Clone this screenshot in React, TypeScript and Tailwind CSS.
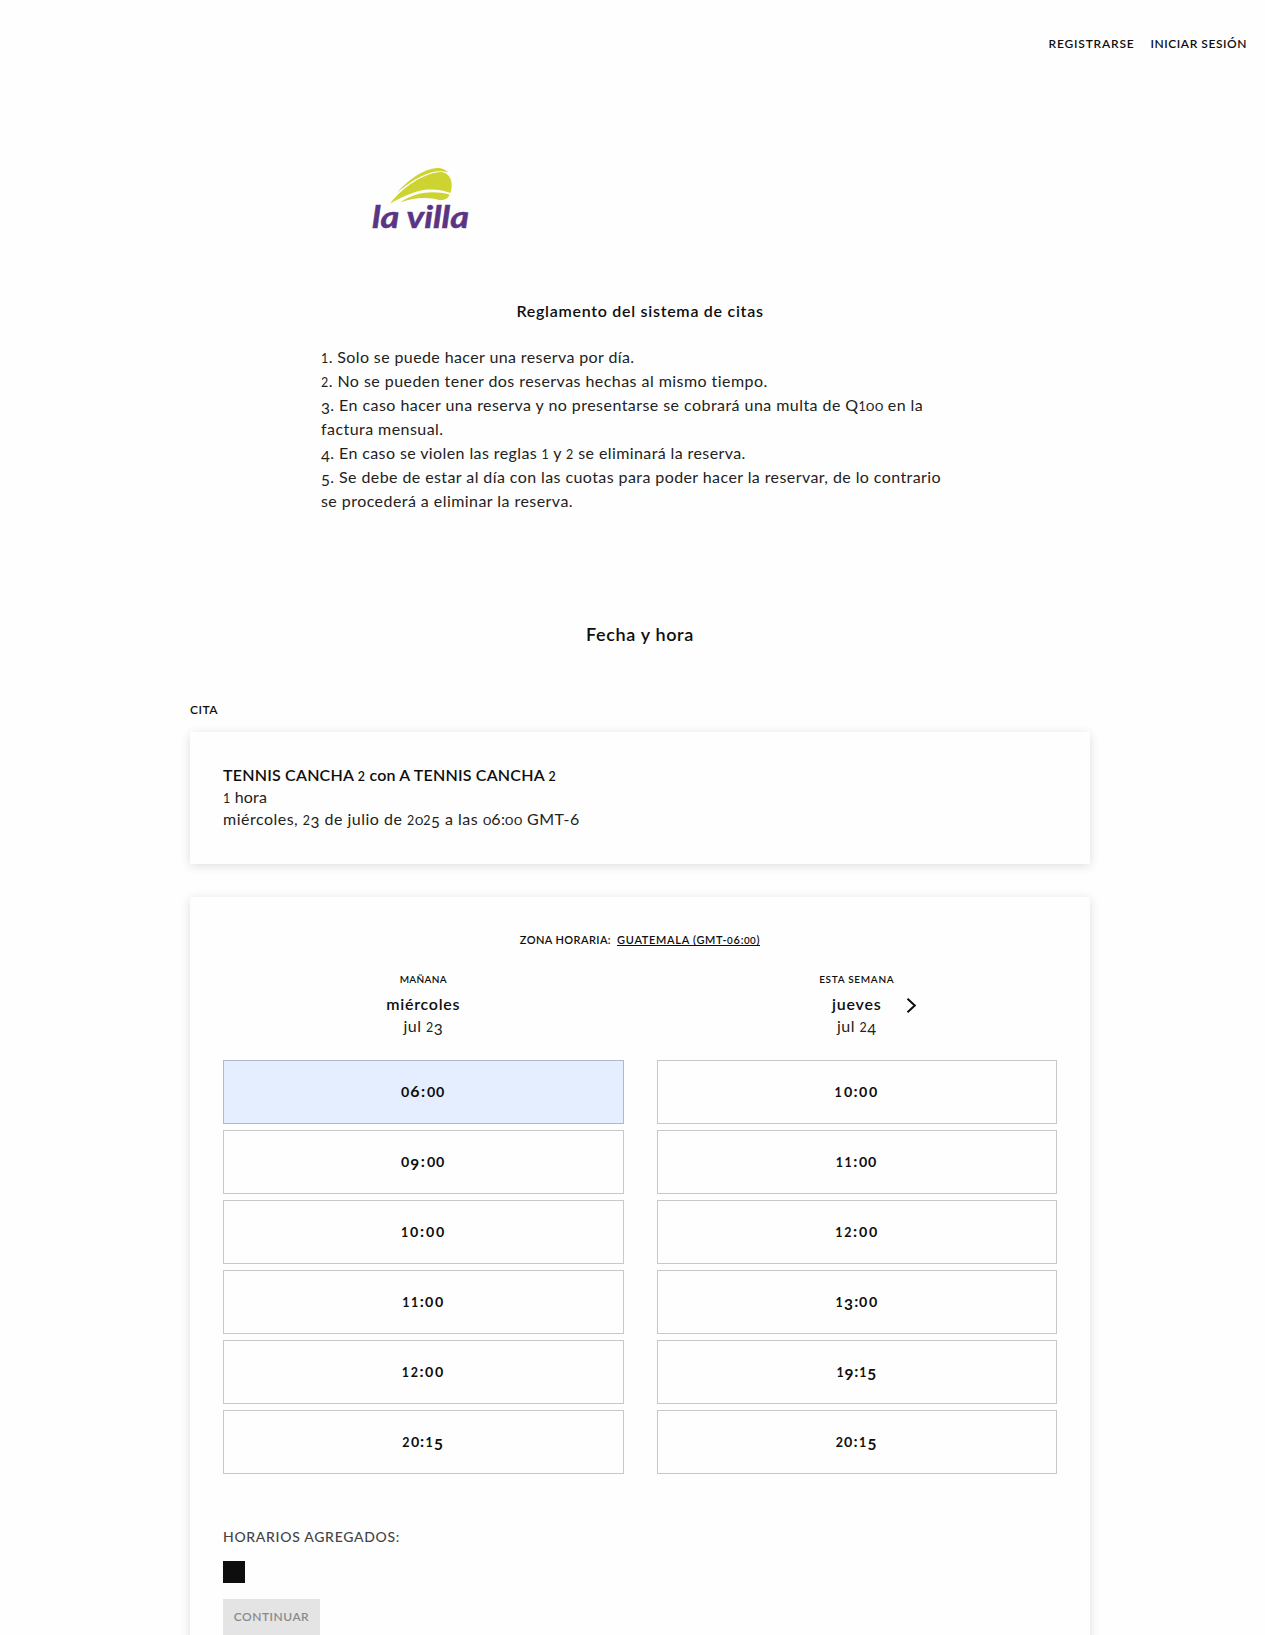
import React from "react";

/** Renders figures in the old-style manner: small 0/1/2, descending 3/4/5/7/9. */
function T({ children, className = "" }: { children: string; className?: string }) {
  const parts = children.split(/(\d)/);
  return (
    <span className={className}>
      {parts.map((p, i) => {
        if (p === "0") return <span key={i} className="mr-[0.07em] inline-block origin-left scale-x-[1.16] text-[0.77em] leading-none">{p}</span>;
        if (/^[12]$/.test(p)) return <span key={i} className="text-[0.78em] leading-[0]">{p}</span>;
        if (/^[34579]$/.test(p)) return <span key={i} className="align-[-0.19em] text-[0.96em] leading-[0]">{p}</span>;
        return p;
      })}
    </span>
  );
}

const rules: [string, string][] = [
  ["1. Solo se puede hacer una reserva por día.", "tracking-[0.388px]"],
  ["2. No se pueden tener dos reservas hechas al mismo tiempo.", "tracking-[0.446px]"],
  ["3. En caso hacer una reserva y no presentarse se cobrará una multa de Q100 en la", "tracking-[0.445px]"],
  ["factura mensual.", "tracking-[0.44px]"],
  ["4. En caso se violen las reglas 1 y 2 se eliminará la reserva.", "tracking-[0.4px]"],
  ["5. Se debe de estar al día con las cuotas para poder hacer la reservar, de lo contrario", "tracking-[0.412px]"],
  ["se procederá a eliminar la reserva.", "tracking-[0.444px]"],
];

const slotTracking: Record<string, string> = {
  "06:00": "tracking-[1.6px]",
  "09:00": "tracking-[1.6px]",
  "10:00": "tracking-[1.8px]",
  "11:00": "tracking-[1.5px]",
  "12:00": "tracking-[1.7px]",
  "13:00": "tracking-[1.2px]",
  "19:15": "tracking-[0.8px]",
  "20:15": "tracking-[1.3px]",
};

const days = [
  {
    tag: "MAÑANA", tagTracking: "tracking-[0.3px]", day: "miércoles", dayTracking: "tracking-[0.75px]", date: "jul 23",
    slots: ["06:00", "09:00", "10:00", "11:00", "12:00", "20:15"], selected: "06:00", next: false,
  },
  {
    tag: "ESTA SEMANA", tagTracking: "tracking-[0.7px]", day: "jueves", dayTracking: "tracking-[0.8px]", date: "jul 24",
    slots: ["10:00", "11:00", "12:00", "13:00", "19:15", "20:15"], selected: "", next: true,
  },
];

function Logo() {
  return (
    <svg className="ml-[48px] block h-[72px] w-[108px]" viewBox="0 0 108 72">
      <g fill="#cdd432">
        <path d="M27.500 29C39 16 55 4.500 68 4C73 4 77 6 79 8.500C66 4.500 50 11 27.500 29Z" />
        <path d="M21 39.500C34 23 54 9.500 71 8C76 8 80 10.500 82 16C83 20 83 24 81.500 29C74 26 66 25 58 25.500C44 27 34 33 21 39.500Z" />
        <path d="M31 38.500C44 29 62 25.500 80.500 30.500C79 34.500 76.500 36 71 36.200C60 33 46 33 31 38.500Z" />
      </g>
      <text x="3" y="64" textLength="97" lengthAdjust="spacingAndGlyphs" className="fill-[#5b3484] stroke-[#5b3484] stroke-[0.5] font-['Lato'] text-[31px] font-bold italic">la villa</text>
    </svg>
  );
}

export default function App() {
  return (
    <div className="h-[1635px] overflow-hidden bg-[#fefefe] font-['Lato',sans-serif] text-base text-[#0e0e0e]">
      <header className="flex h-[88px] justify-end gap-4 pr-[18px] text-xs leading-[88px] font-semibold">
        <T className="tracking-[0.8px]">REGISTRARSE</T>
        <T className="tracking-[0.55px]">INICIAR SESIÓN</T>
      </header>
      <div className="ml-[321px] w-[638px] pt-[76px]">
        <Logo />
        <h2 className="mt-[63px] text-center leading-6 font-semibold"><T className="tracking-[0.72px]">Reglamento del sistema de citas</T></h2>
        <div className="mt-[22px] text-[#222]">
          {rules.map(([r, tracking]) => <p key={r} className="h-6 leading-6 whitespace-nowrap"><T className={tracking}>{r}</T></p>)}
        </div>
      </div>
      <h1 className="mt-[107px] pl-[15px] text-center text-lg leading-7 font-semibold"><T className="tracking-[0.65px]">Fecha y hora</T></h1>
      <main className="ml-[190px] w-[900px]">
        <h3 className="mt-[52px] text-xs leading-5 font-semibold"><T className="tracking-[0.5px]">CITA</T></h3>
        <section className="mt-[12px] h-[132px] px-[33px] pt-8 leading-[22px] shadow-[0_2px_10px_rgba(0,0,0,0.13)]">
          <p className="h-[22px] font-semibold"><T className="tracking-[0.209px]">TENNIS CANCHA 2 con A TENNIS CANCHA 2</T></p>
          <p className="h-[22px] text-[#222]"><T className="tracking-[0.17px]">1 hora</T></p>
          <p className="h-[22px] text-[#222]"><T className="tracking-[0.49px]">miércoles, 23 de julio de 2025 a las 06:00 GMT-6</T></p>
        </section>
        <section className="mt-[33px] h-[800px] px-[33px] pt-[33px] shadow-[0_2px_10px_rgba(0,0,0,0.13)]">
          <div className="flex h-5 justify-center gap-[6px] text-[11px] leading-5 font-semibold">
            <T className="tracking-[0.4px]">ZONA HORARIA:</T>
            <T className="mt-[3px] h-[13px] border-b border-[#0e0e0e] leading-[14px] tracking-[0.68px]">GUATEMALA (GMT-06:00)</T>
          </div>
          <div className="mt-[21px] grid grid-cols-2 gap-x-[33px]">
            {days.map((d) => (
              <div key={d.tag} className="text-center">
                <p className="text-[10px] leading-4 font-semibold"><T className={d.tagTracking}>{d.tag}</T></p>
                <p className="relative mt-[6px] h-[22px] leading-[22px] font-semibold">
                  <T className={d.dayTracking}>{d.day}</T>
                  {d.next && (
                    <svg className="absolute top-[5px] left-[249px] h-[15px] w-3" viewBox="0 0 12 15" fill="none" stroke="#0e0e0e" strokeWidth="2">
                      <path d="M1.500 0.800L8.800 7.500L1.500 14.200" />
                    </svg>
                  )}
                </p>
                <p className="mb-[23px] h-[22px] leading-[22px] text-[#222]"><T className="tracking-[0.45px]">{d.date}</T></p>
                <div className="flex flex-col gap-[6px]">
                  {d.slots.map((s) => (
                    <button
                      key={s}
                      className={s === d.selected ? "h-16 border border-[#b0b9cc] bg-[#e4eeff] pb-[3px] font-bold" : "h-16 border border-[#c8c8c8] pb-[3px] font-bold"}
                    >
                      <T className={slotTracking[s]}>{s}</T>
                    </button>
                  ))}
                </div>
              </div>
            ))}
          </div>
          <p className="mt-[51px] text-sm leading-6 font-medium text-[#444]"><T className="tracking-[0.69px]">HORARIOS AGREGADOS:</T></p>
          <div className="mt-3 size-[22px] bg-[#0e0e0e]" />
          <button className="mt-4 h-11 w-[97px] bg-[#e4e4e4] pb-2 text-xs font-semibold text-[#8a8a8a]"><T className="tracking-[0.5px]">CONTINUAR</T></button>
        </section>
      </main>
    </div>
  );
}
